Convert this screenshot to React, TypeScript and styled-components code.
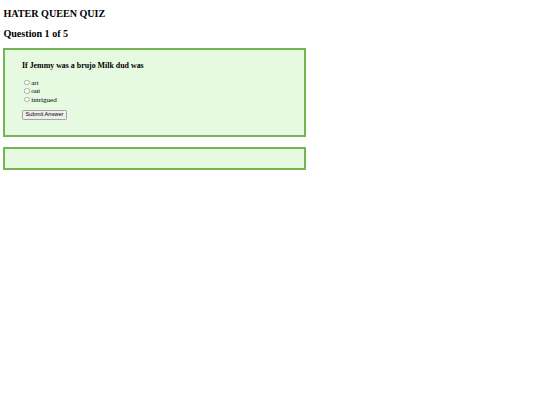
import React, { useState } from "react";
import styled, { createGlobalStyle } from "styled-components";

const GlobalStyle = createGlobalStyle`
  html,
  body {
    margin: 0;
    background: #ffffff;
  }

  body {
    font-family: "Liberation Serif", "Times New Roman", serif;
    color: #000000;
  }
`;

const Page = styled.main`
  padding: 8.4px 3.4px 0;
`;

const Heading = styled.h2`
  margin: 0 0 8.4px;
  font-size: 10.1px;
  font-weight: bold;
  line-height: 1.107;
`;

const Card = styled.section<{ $compact?: boolean }>`
  box-sizing: border-box;
  width: 302.6px;
  height: ${(p) => (p.$compact ? "23.3px" : "89.4px")};
  margin-top: ${(p) => (p.$compact ? "9.7px" : "0")};
  padding: 12.4px 16.6px 0;
  background-color: #e6fae1;
  border: 2px solid #74b651;
`;

const QuestionText = styled.h3`
  margin: 0 0 7.9px;
  font-size: 7.9px;
  font-weight: bold;
  line-height: 1.107;
`;

const Options = styled.div`
  display: flex;
  flex-direction: column;
`;

const Option = styled.label`
  display: flex;
  align-items: center;
  height: 8.4px;
  font-size: 7.1px;
`;

const Radio = styled.input`
  appearance: none;
  box-sizing: border-box;
  width: 5.5px;
  height: 5.5px;
  margin: 0 1.6px 0 2.1px;
  border: 1px solid #a9a9a9;
  border-radius: 50%;
  background: #ffffff;

  &:checked {
    background: radial-gradient(circle, #1a73e8 40%, #ffffff 45%);
  }
`;

const SubmitButton = styled.button`
  display: block;
  box-sizing: border-box;
  height: 9.3px;
  margin-top: 6.75px;
  padding: 0 2.6px;
  font-family: "Liberation Sans", Arial, sans-serif;
  font-size: 5.7px;
  line-height: 1;
  color: #000000;
  background: #efefef;
  border: 1px solid #a3a3a3;
  border-radius: 1.3px;
`;

const answers = ["art", "out", "intrigued"];

export default function App() {
  const [picked, setPicked] = useState<string | null>(null);

  return (
    <>
      <GlobalStyle />
      <Page>
        <Heading>HATER QUEEN QUIZ</Heading>
        <Heading>Question 1 of 5</Heading>
        <Card>
          <QuestionText>If Jemmy was a brujo Milk dud was</QuestionText>
          <Options>
            {answers.map((a) => (
              <Option key={a}>
                <Radio
                  type="radio"
                  name="answer"
                  value={a}
                  checked={picked === a}
                  onChange={() => setPicked(a)}
                />
                {a}
              </Option>
            ))}
          </Options>
          <SubmitButton type="button">Submit Answer</SubmitButton>
        </Card>
        <Card $compact />
      </Page>
    </>
  );
}
